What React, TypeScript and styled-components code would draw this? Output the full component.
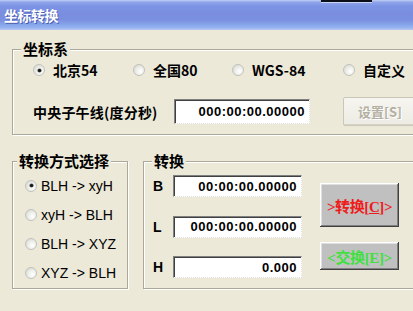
import React from "react";
import styled, { createGlobalStyle, css } from "styled-components";

const Global = createGlobalStyle`
  html, body { margin: 0; padding: 0; background: #ECE9D8; }
  body { width: 413px; height: 311px; overflow: hidden; }
  * { box-sizing: border-box; }
`;

const CJK = `"Noto Sans CJK SC", "Liberation Sans", sans-serif`;
const LATIN = `"Liberation Sans", "Noto Sans CJK SC", sans-serif`;

const Window = styled.div`
  position: relative;
  width: 413px;
  height: 311px;
  overflow: hidden;
  background: #ECE9D8;
  display: flex;
  flex-direction: column;
`;

const TitleBar = styled.div`
  position: relative;
  height: 30px;
  flex: none;
  display: flex;
  align-items: center;
  padding-left: 4px;
  background: linear-gradient(
    #c4d0f4 0px,
    #90a6ea 2px,
    #7c94e4 6px,
    #7a8ddf 14px,
    #7b90e0 20px,
    #87a6ea 25px,
    #9ab6f0 28px,
    #b9c8ee 30px
  );
`;

const Title = styled.span`
  font-family: ${CJK};
  font-weight: 700;
  font-size: 14px;
  color: #ffffff;
  text-shadow: 1px 1px 0 #4a5db0;
  letter-spacing: -0.5px;
`;

const Overlay = styled.div`
  position: absolute;
  left: 321px;
  top: 0;
  width: 51px;
  height: 3px;
  background: #0a0f1a;
  border-bottom: 1px solid #c8d4f0;
`;

const Body = styled.div`
  display: flex;
  flex-direction: column;
  padding: 10px 0 0 12px;
`;

const Group = styled.fieldset<{ $width: number; $height?: number }>`
  margin: 0;
  padding: 0;
  flex: none;
  width: ${(p) => p.$width}px;
  ${(p) => p.$height && css`height: ${p.$height}px;`}
  border: 1px solid #ACA899;
  border-radius: 0;
  box-shadow: inset 1px 1px 0 #ffffff, 1px 1px 0 #ffffff;
  min-width: 0;
`;

const Legend = styled.legend<{ $offset: number }>`
  margin-left: ${(p) => p.$offset}px;
  padding: 0 2px;
  background: #ECE9D8;
  font-family: ${CJK};
  font-weight: 700;
  font-size: 15px;
  line-height: 18px;
  color: #000;
`;

const RadioRow = styled.div`
  display: grid;
  grid-template-columns: 100px 99px 111px auto;
  height: 20px;
  margin: 2px 0 0 20px;
  align-items: center;
`;

const RadioItem = styled.label<{ $gap: number; $bold?: boolean }>`
  display: flex;
  align-items: center;
  gap: ${(p) => p.$gap}px;
  font-family: ${(p) => (p.$bold ? CJK : LATIN)};
  font-weight: ${(p) => (p.$bold ? 700 : 400)};
  font-size: 14px;
  color: #000;
  white-space: nowrap;
`;

const RadioDot = styled.span<{ $checked?: boolean }>`
  position: relative;
  width: 12px;
  height: 12px;
  flex: none;
  border-radius: 50%;
  border: 1px solid #c2c2bc;
  background: radial-gradient(circle at 65% 65%, #ffffff 0, #f0f0ec 40%, #d2d2cc 100%);
  &::after {
    content: "";
    display: ${(p) => (p.$checked ? "block" : "none")};
    position: absolute;
    left: 3.5px;
    top: 3.5px;
    width: 3px;
    height: 3px;
    border-radius: 50%;
    background: #1a1a1a;
    box-shadow: 0 0 0 0.6px #555;
  }
`;

const MeridianRow = styled.div`
  display: flex;
  align-items: center;
  height: 29px;
  margin: 17px 0 8px 20px;
`;

const FieldLabel = styled.span`
  font-family: ${CJK};
  font-weight: 700;
  font-size: 14px;
  letter-spacing: 0.2px;
  width: 141px;
  flex: none;
  color: #000;
`;

const TextBox = styled.div<{ $width: number; $height: number }>`
  width: ${(p) => p.$width}px;
  height: ${(p) => p.$height}px;
  flex: none;
  display: flex;
  align-items: center;
  justify-content: flex-end;
  padding-right: 4px;
  background: #ffffff;
  border-top: 1px solid #808080;
  border-left: 1px solid #808080;
  border-right: 1px dotted #e0e0e0;
  border-bottom: 1px dotted #e0e0e0;
  box-shadow: inset 1px 1px 0 #404040;
  font-family: ${LATIN};
  font-weight: 700;
  font-size: 13px;
  letter-spacing: 0.5px;
  color: #000;
`;

const SetButton = styled.button`
  margin-left: 33px;
  width: 80px;
  height: 29px;
  flex: none;
  padding: 0 0 0 14px;
  text-align: left;
  background: linear-gradient(#f6f5ef, #ecebe4);
  border: 1px solid #c9c7ba;
  border-radius: 2px;
  box-shadow: inset -1px -1px 0 #d6d3c4;
  font-family: ${CJK};
  font-weight: 700;
  font-size: 13px;
  color: #b3b0a2;
  text-shadow: 1px 1px 0 #ffffff;
`;

const LowerRow = styled.div`
  display: flex;
  gap: 15px;
  margin-top: 17px;
`;

const ModeList = styled.div`
  display: flex;
  flex-direction: column;
  padding: 1px 0 0 12px;
`;

const ModeRow = styled.div`
  height: 29px;
  display: flex;
  align-items: center;
`;

const ConvertInner = styled.div`
  display: flex;
  padding: 5px 0 0 9px;
`;

const InputsColumn = styled.div`
  display: flex;
  flex-direction: column;
  gap: 18.5px;
`;

const InputRow = styled.div`
  display: flex;
  align-items: center;
`;

const AxisLabel = styled.span`
  width: 20px;
  font-family: ${LATIN};
  font-weight: 700;
  font-size: 14px;
  color: #000;
`;

const ButtonsColumn = styled.div`
  display: flex;
  flex-direction: column;
  gap: 15px;
  margin-left: 18px;
  padding-top: 8px;
`;

const ActionButton = styled.button<{ $color: string; $height: number }>`
  width: 79px;
  height: ${(p) => p.$height}px;
  padding: 0;
  background: #c0c0c0;
  border: none;
  box-shadow: inset -1px -1px 0 #404040, inset 1px 1px 0 #ffffff,
    inset -2px -2px 0 #808080, inset 2px 2px 0 #dfdfdf;
  font-family: "Liberation Serif", "Noto Sans CJK SC", serif;
  font-weight: 700;
  font-size: 15px;
  color: ${(p) => p.$color};
  letter-spacing: -0.4px;
  u { text-decoration: underline; }
`;

const coordSystems = [
  { label: "北京54", checked: true },
  { label: "全国80" },
  { label: "WGS-84" },
  { label: "自定义" },
];

const modes = ["BLH -> xyH", "xyH -> BLH", "BLH -> XYZ", "XYZ -> BLH"];

const inputs = [
  { axis: "B", value: "00:00:00.00000" },
  { axis: "L", value: "000:00:00.00000" },
  { axis: "H", value: "0.000" },
];

export default function App() {
  return (
    <>
      <Global />
      <Window>
        <TitleBar>
          <Title>坐标转换</Title>
          <Overlay />
        </TitleBar>
        <Body>
          <Group $width={410}>
            <Legend $offset={8}>坐标系</Legend>
            <RadioRow>
              {coordSystems.map((c) => (
                <RadioItem key={c.label} $gap={8} $bold>
                  <RadioDot $checked={c.checked} />
                  {c.label}
                </RadioItem>
              ))}
            </RadioRow>
            <MeridianRow>
              <FieldLabel>中央子午线(度分秒)</FieldLabel>
              <TextBox $width={136} $height={25}>000:00:00.00000</TextBox>
              <SetButton disabled>设置[S]</SetButton>
            </MeridianRow>
          </Group>
          <LowerRow>
            <Group $width={116} $height={137}>
              <Legend $offset={4}>转换方式选择</Legend>
              <ModeList>
                {modes.map((m, i) => (
                  <ModeRow key={m}>
                    <RadioItem $gap={4}>
                      <RadioDot $checked={i === 0} />
                      {m}
                    </RadioItem>
                  </ModeRow>
                ))}
              </ModeList>
            </Group>
            <Group $width={290} $height={137}>
              <Legend $offset={8}>转换</Legend>
              <ConvertInner>
                <InputsColumn>
                  {inputs.map((r) => (
                    <InputRow key={r.axis}>
                      <AxisLabel>{r.axis}</AxisLabel>
                      <TextBox $width={129} $height={22}>{r.value}</TextBox>
                    </InputRow>
                  ))}
                </InputsColumn>
                <ButtonsColumn>
                  <ActionButton $color="#ee1c1c" $height={44}>
                    &gt;转换[<u>C</u>]&gt;
                  </ActionButton>
                  <ActionButton $color="#3fe03f" $height={28}>
                    &lt;交换[E]&gt;
                  </ActionButton>
                </ButtonsColumn>
              </ConvertInner>
            </Group>
          </LowerRow>
        </Body>
      </Window>
    </>
  );
}
